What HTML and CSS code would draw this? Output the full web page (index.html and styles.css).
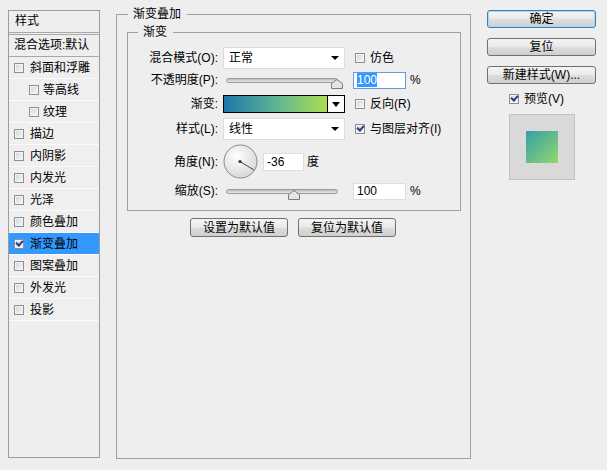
FILE: index.html
```html
<!DOCTYPE html>
<html>
  <head>
    <meta charset="utf-8">
    <meta name="viewport" content="width=device-width, initial-scale=1.0">
    <title>图层样式</title>
    <link rel="stylesheet" href="styles.css">
  </head>
  <body>
    <div class="dialog">
      <div class="styles-list">
        <div class="list-head">样式</div>
        <div class="list-blend">混合选项:默认</div>
        <div class="list-item"><span class="cb"></span>斜面和浮雕</div>
        <div class="list-item sub"><span class="cb"></span>等高线</div>
        <div class="list-item sub"><span class="cb"></span>纹理</div>
        <div class="list-item"><span class="cb"></span>描边</div>
        <div class="list-item"><span class="cb"></span>内阴影</div>
        <div class="list-item"><span class="cb"></span>内发光</div>
        <div class="list-item"><span class="cb"></span>光泽</div>
        <div class="list-item"><span class="cb"></span>颜色叠加</div>
        <div class="list-item active"><span class="cb on"></span>渐变叠加</div>
        <div class="list-item"><span class="cb"></span>图案叠加</div>
        <div class="list-item"><span class="cb"></span>外发光</div>
        <div class="list-item"><span class="cb"></span>投影</div>
      </div>

      <fieldset class="group">
        <legend>渐变叠加</legend>
        <fieldset class="inner">
          <legend>渐变</legend>
          <div class="form">
            <label class="lbl">混合模式(O):</label>
            <div class="select"><span>正常</span><i class="arrow"></i></div>
            <div class="opt"><span class="cb"></span>仿色</div>

            <label class="lbl">不透明度(P):</label>
            <div class="slider">
              <svg class="thumb" style="left: calc(100% - 6px)" width="12" height="10" viewBox="0 0 12 10">
                <polygon points="6,0.5 11.5,4.5 11.5,9.5 0.5,9.5 0.5,4.5" fill="#e4e4e4" stroke="#7c7c7c"/>
              </svg>
            </div>
            <div class="opt"><span class="num focus"><span class="sel">100</span></span><span class="unit">%</span></div>

            <label class="lbl">渐变:</label>
            <div class="gradient"><span class="ramp"></span><span class="drop"><i class="arrow big"></i></span></div>
            <div class="opt"><span class="cb"></span>反向(R)</div>

            <label class="lbl">样式(L):</label>
            <div class="select"><span>线性</span><i class="arrow"></i></div>
            <div class="opt"><span class="cb on"></span>与图层对齐(I)</div>

            <label class="lbl">角度(N):</label>
            <div class="angle">
              <svg width="35" height="35" viewBox="0 0 35 35">
                <defs>
                  <radialGradient id="dial" cx="40%" cy="35%" r="70%">
                    <stop offset="0" stop-color="#ffffff"/>
                    <stop offset="1" stop-color="#d6d6d6"/>
                  </radialGradient>
                </defs>
                <circle cx="17.5" cy="17.5" r="16.5" fill="url(#dial)" stroke="#8a8a8a"/>
                <line x1="17" y1="17.5" x2="31" y2="26" stroke="#444" stroke-width="1"/>
                <circle cx="17" cy="17.5" r="1.6" fill="#333"/>
              </svg>
              <span class="num short">-36</span>
              <span class="unit">度</span>
            </div>
            <span></span>

            <label class="lbl">缩放(S):</label>
            <div class="slider">
              <svg class="thumb" style="left: calc(61% - 6px)" width="12" height="10" viewBox="0 0 12 10">
                <polygon points="6,0.5 11.5,4.5 11.5,9.5 0.5,9.5 0.5,4.5" fill="#e4e4e4" stroke="#7c7c7c"/>
              </svg>
            </div>
            <div class="opt"><span class="num">100</span><span class="unit">%</span></div>
          </div>
        </fieldset>
        <div class="defaults">
          <button>设置为默认值</button>
          <button>复位为默认值</button>
        </div>
      </fieldset>

      <div class="actions">
        <button class="primary">确定</button>
        <button>复位</button>
        <button>新建样式(W)...</button>
        <div class="preview-toggle"><span class="cb on"></span>预览(V)</div>
        <div class="preview"><div class="swatch"></div></div>
      </div>
    </div>
  </body>
</html>
```

FILE: styles.css
```css
body {
  margin: 0;
  background: #eeeeee;
  color: #000;
  font: 12px/14px "Liberation Sans", "Noto Sans CJK SC", sans-serif;
}
.dialog {
  display: flex;
  align-items: flex-start;
  padding-left: 8px;
}

/* left list of effects */
.styles-list {
  margin-top: 10px;
  width: 92px;
  height: 448px;
  box-sizing: border-box;
  border: 1px solid #9c9c9c;
}
.list-head {
  height: 21px;
  line-height: 21px;
  padding-left: 6px;
  border-bottom: 1px solid #a8a8a8;
}
.list-blend {
  margin-top: 1px;
  height: 21px;
  line-height: 21px;
  padding-left: 5px;
  border-top: 1px solid #a8a8a8;
  border-bottom: 1px solid #a8a8a8;
  white-space: nowrap;
  overflow: hidden;
}
.list-item {
  display: flex;
  align-items: center;
  height: 21px;
  padding-left: 5px;
  background: #efefef;
  border-bottom: 1px solid #fbfbfb;
  white-space: nowrap;
}
.list-item .cb {
  margin-right: 6px;
}
.list-item.sub {
  padding-left: 20px;
}
.list-item.sub .cb {
  margin-right: 4px;
}
.list-item.active {
  background: #3399ff;
}

/* checkbox */
.cb {
  position: relative;
  flex: none;
  width: 10px;
  height: 10px;
  box-sizing: border-box;
  border: 1px solid #8e8f8f;
  background: linear-gradient(135deg, #d4d4d4, #f8f8f8);
  box-shadow: inset 0 0 0 1px #f4f4f4;
}
.cb.on::after {
  content: "";
  position: absolute;
  left: 1px;
  top: 0px;
  width: 5px;
  height: 3px;
  border-left: 2px solid #26398c;
  border-bottom: 2px solid #26398c;
  transform: rotate(-48deg);
}

/* group boxes */
.group {
  margin: 7px 0 0 16px;
  padding: 4px 9px 0 10px;
  width: 355px;
  height: 452px;
  box-sizing: border-box;
  border: 1px solid #a0a0a0;
  min-width: 0;
}
.group > legend {
  margin-left: 1px;
  padding: 0 6px 0 5px;
  line-height: 14px;
}
.inner {
  margin: 0;
  padding: 7px 0 10px 0;
  border: 1px solid #a0a0a0;
  min-width: 0;
}
.inner > legend {
  margin-left: 10px;
  padding: 0 6px 0 5px;
  line-height: 14px;
}

.form {
  display: grid;
  grid-template-columns: 90px 122px auto;
  grid-template-rows: 23px 22px 26px 24px 41px 18px;
  column-gap: 5px;
  align-items: center;
}
.lbl {
  text-align: right;
  white-space: nowrap;
}
.select {
  display: flex;
  align-items: center;
  justify-content: space-between;
  height: 22px;
  box-sizing: border-box;
  padding-left: 5px;
  background: #fff;
  border: 1px solid #dcdcdc;
}
.arrow {
  width: 0;
  height: 0;
  margin-right: 5px;
  border-left: 4px solid transparent;
  border-right: 4px solid transparent;
  border-top: 4px solid #000;
}
.arrow.big {
  margin: 0;
  border-left-width: 4px;
  border-right-width: 4px;
  border-top-width: 5px;
}
.opt {
  display: flex;
  align-items: center;
  white-space: nowrap;
}
.opt .cb {
  margin: 0 5px 0 5px;
}
.num {
  display: inline-block;
  width: 53px;
  height: 17px;
  box-sizing: border-box;
  margin-left: 3px;
  padding-left: 3px;
  line-height: 15px;
  background: #fff;
  border: 1px solid #dedede;
}
.num.focus {
  border-color: #5a9fe6;
}
.sel {
  background: #3399ff;
  color: #fff;
}
.unit {
  margin-left: 4px;
}

.slider {
  position: relative;
  width: 112px;
  height: 5px;
  margin-left: 3px;
  box-sizing: border-box;
  border: 1px solid #9a9a9a;
  border-radius: 3px;
  background: linear-gradient(#bdbdbd, #e8e8e8);
}
.thumb {
  position: absolute;
  top: 0;
}

.gradient {
  display: flex;
  height: 18px;
  box-sizing: border-box;
  border: 1px solid #000;
}
.ramp {
  flex: 1;
  border-right: 1px solid #000;
  background: linear-gradient(90deg, #1d76a8, #5fb396 50%, #aadf4e);
}
.drop {
  display: flex;
  align-items: center;
  justify-content: center;
  width: 16px;
  background: #fff;
}

.angle {
  display: flex;
  align-items: center;
}
.angle svg {
  flex: none;
}
.num.short {
  width: 41px;
  height: 18px;
  margin-left: 5px;
  line-height: 16px;
}
.angle .unit {
  margin-left: 3px;
}

.defaults {
  display: flex;
  justify-content: center;
  gap: 10px;
  margin: 7px 0 0 -2px;
}
.defaults button {
  width: 98px;
  height: 19px;
}

/* buttons */
button {
  height: 18px;
  padding: 0;
  font: inherit;
  line-height: 16px;
  color: #000;
  border: 1px solid #707070;
  border-radius: 3px;
  background: linear-gradient(#f4f4f4, #ebebeb 45%, #dcdcdc 55%, #cfcfcf);
}
button.primary {
  border-color: #3c7fb1;
  box-shadow: inset 0 0 0 1px #a6d8f5;
}

/* right column */
.actions {
  display: flex;
  flex-direction: column;
  align-items: center;
  gap: 10px;
  width: 109px;
  margin: 10px 0 0 16px;
}
.actions button {
  width: 109px;
}
.preview-toggle {
  display: flex;
  align-items: center;
  height: 14px;
  margin-top: -2px;
  margin-right: 10px;
}
.preview-toggle .cb {
  margin-right: 5px;
}
.preview {
  display: flex;
  align-items: center;
  justify-content: center;
  width: 66px;
  height: 66px;
  box-sizing: border-box;
  margin-top: -2px;
  border: 1px solid #c2c2c2;
  background: #d9d9d9;
}
.swatch {
  width: 32px;
  height: 32px;
  background: linear-gradient(135deg, #35a0a4, #94d76e);
}
```
